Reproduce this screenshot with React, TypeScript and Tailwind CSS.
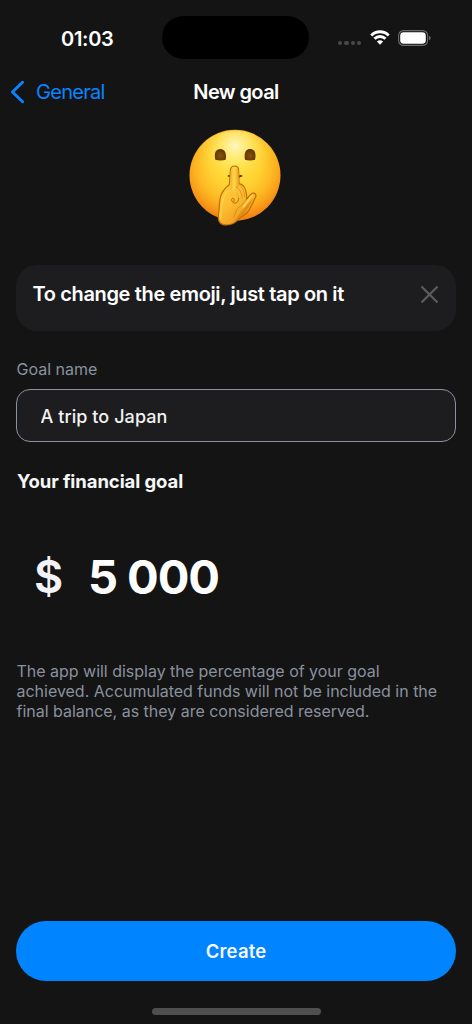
import { useState } from 'react';

function StatusBar() {
  return (
    <div className="flex h-[43px] items-center">
      <div className="w-[162.4px] pt-[2.5px] pl-[61px] text-[20px] leading-[24px] font-semibold tracking-[-0.015em]">
        01:03
      </div>
      <div className="h-[43px] w-[147px] rounded-full bg-black" />
      <div className="flex items-center pl-[28.6px]">
        <div className="flex gap-[2.2px] pt-[11px]">
          <span className="size-[4.2px] rounded-full bg-[#484848]" />
          <span className="size-[4.2px] rounded-full bg-[#484848]" />
          <span className="size-[4.2px] rounded-full bg-[#484848]" />
          <span className="size-[4.2px] rounded-full bg-[#484848]" />
        </div>
        <svg className="ml-[8.3px] h-[15px] w-[20px]" viewBox="0 0 20 15" fill="none">
          <path d="M1.3 5.4a12.3 12.3 0 0 1 17.4 0" stroke="#fff" strokeWidth="2.9" />
          <path d="M4.5 8.8a7.7 7.7 0 0 1 11 0" stroke="#fff" strokeWidth="2.8" />
          <path d="M10 14.8 6.9 11.6a4.5 4.5 0 0 1 6.2 0Z" fill="#fff" />
        </svg>
        <svg className="ml-[8px] h-[16px] w-[33px]" viewBox="0 0 33 16" fill="none">
          <rect x="0.6" y="0.6" width="29" height="14.8" rx="4.8" stroke="#6b6b6b" strokeWidth="1.1" />
          <rect x="2.2" y="2.3" width="25.6" height="11.4" rx="3.4" fill="#fff" />
          <path d="M31 5.8c1.2.5 1.6 1.3 1.6 2.2s-.4 1.7-1.6 2.2Z" fill="#6b6b6b" />
        </svg>
      </div>
    </div>
  );
}

function ShushingEmoji() {
  return (
    <svg className="h-[115px] w-[110px]" viewBox="3 0 330 345" fill="none">
      <defs>
        <radialGradient id="face" cx="165" cy="135" r="168" gradientUnits="userSpaceOnUse">
          <stop offset="0" stopColor="#ffde38" />
          <stop offset="0.45" stopColor="#ffd030" />
          <stop offset="0.68" stopColor="#fdb924" />
          <stop offset="0.85" stopColor="#f99c19" />
          <stop offset="1" stopColor="#ee7f12" />
        </radialGradient>
        <radialGradient id="shine" cx="165" cy="78" r="115" gradientUnits="userSpaceOnUse">
          <stop offset="0" stopColor="#fffbd0" stopOpacity="0.9" />
          <stop offset="0.4" stopColor="#fff386" stopOpacity="0.6" />
          <stop offset="1" stopColor="#ffe13a" stopOpacity="0" />
        </radialGradient>
        <linearGradient id="hand" x1="125" y1="190" x2="205" y2="290" gradientUnits="userSpaceOnUse">
          <stop offset="0" stopColor="#ffcf3c" />
          <stop offset="0.5" stopColor="#fdbd33" />
          <stop offset="1" stopColor="#ee9a1b" />
        </linearGradient>
        <linearGradient id="finger" x1="150" y1="0" x2="177" y2="0" gradientUnits="userSpaceOnUse">
          <stop offset="0" stopColor="#f3a81d" />
          <stop offset="0.45" stopColor="#ffd94d" />
          <stop offset="1" stopColor="#f0a01c" />
        </linearGradient>
        <radialGradient id="eye" cx="0.5" cy="0.6" r="0.6">
          <stop offset="0" stopColor="#875408" />
          <stop offset="1" stopColor="#5b3200" />
        </radialGradient>
      </defs>
      <circle cx="165" cy="166" r="136.5" fill="url(#face)" />
      <circle cx="165" cy="166" r="134" fill="url(#shine)" />
      <path d="M106 119c-5-22 3-32 15-32s20 11 16 32c-9 3-22 3-31 0Z" fill="url(#eye)" />
      <path d="M195 119c-4-21 3-32 15-32s20 10 15 32c-9 3-21 3-30 0Z" fill="url(#eye)" />
      <path d="M142 168c3-4 6-4 9-2 8 3 22 3 28 0 4-2 7-1 9 2-3 3-6 3-8 4-4 4-8 5-15 5s-11-1-14-5c-3-1-6-1-9-4Z" fill="#633407" />
      {/* hand */}
      <path
        d="M151 151c1-9 5-13 13-13s12 5 12 14l1 39c10 2 17 9 20 20 2 9 4 17 3 27 5-8 10-14 17-18 7-3 13 4 10 11l-20 40c-8 16-22 16-31 26-8 10-21 18-38 18-19 0-26-13-22-35 3-15 1-28 4-43 3-17 11-31 28-43Z"
        stroke="#c06a08"
        strokeWidth="3.5"
        fill="url(#hand)"
      />
      <path d="M152 153c1-8 5-12 12-12s10 4 11 12l2 48-25 10Z" fill="url(#finger)" />
      {/* curled fingers and the palm fold */}
      <path d="M160 248c5-8 2-15-3-13-6 4 1 17 11 14 11-4 12-27-2-39" stroke="#bd700a" strokeWidth="3" strokeLinecap="round" />
      <path d="M168 201c11 5 18 17 18 34M179 195c9 7 14 19 15 36" stroke="#d88b14" strokeWidth="2.5" strokeLinecap="round" />
      <path d="M160 208c10 4 16 12 18 24" stroke="#ffdc58" strokeWidth="4" strokeLinecap="round" opacity="0.7" />
      <path d="M199 238c-8 18-22 20-29 31-5 8-4 15-9 22" stroke="#d88b14" strokeWidth="3" strokeLinecap="round" />
      <path d="M218 226c-9 8-19 23-27 34" stroke="#ffd64c" strokeWidth="6" strokeLinecap="round" />
      <path d="M185 274c-8 10-15 22-26 29 19-4 35-17 42-33l16-31c-11 8-22 23-32 35Z" fill="#d67f0e" opacity="0.6" />
      <path d="M122 294c-3-20 4-40 8-58 3-9 9-19 16-23" stroke="#ffda50" strokeWidth="6" strokeLinecap="round" opacity="0.6" />
    </svg>
  );
}

export default function App() {
  const [goalName, setGoalName] = useState('A trip to Japan');

  return (
    <div className="flex h-[1024px] w-[472px] flex-col overflow-hidden bg-[#141414] pt-[16.4px] font-['Inter',sans-serif] text-white">
      <StatusBar />

      <div className="mt-[14.6px] grid h-[36px] grid-cols-[1fr_auto_1fr] items-center text-[20px] leading-[24px]">
        <button className="flex items-center pl-[10px] text-[#0a84ff]">
          <svg className="h-[24px] w-[15px]" viewBox="0 0 15 24" fill="none">
            <path d="M12.6 2.2 2.4 12l10.2 9.8" stroke="currentColor" strokeWidth="2.9" strokeLinecap="round" strokeLinejoin="round" />
          </svg>
          <span className="ml-[11px] tracking-[-0.035em]">General</span>
        </button>
        <h1 className="font-semibold tracking-[-0.03em]">New goal</h1>
        <span />
      </div>

      <div className="mt-[10px] flex justify-center">
        <ShushingEmoji />
      </div>

      <div className="mx-4 mt-[30px] flex h-[66px] justify-between rounded-[21px] bg-[#1d1d1f] pt-[17px] pr-[18px] pl-[16.5px]">
        <p className="text-[20px] leading-[24px] font-semibold tracking-[-0.018em]">To change the emoji, just tap on it</p>
        <svg className="mt-[4px] size-[17px]" viewBox="0 0 17 17" fill="none">
          <path d="m1.2 1.2 14.6 14.6m0-14.6L1.2 15.8" stroke="#5b5b5e" strokeWidth="2.3" strokeLinecap="round" />
        </svg>
      </div>

      <div className="mx-4 mt-[28px]">
        <label className="block pl-[0.5px] text-[16px] leading-[20px] text-[#8a919e]">Goal name</label>
        <input
          value={goalName}
          onChange={(e) => setGoalName(e.target.value)}
          className="mt-[10px] block h-[53px] w-full rounded-[14px] border border-[#8a919e] bg-[#1d1d1f] px-[23.5px] pt-[2px] text-[18px] font-medium tracking-[0.004em] text-[#f2f2f2] outline-none"
        />
      </div>

      <h2 className="mt-[27px] ml-[17px] text-[18.5px] leading-[24px] font-bold tracking-[-0.004em] text-[#f7f7f7]">
        Your financial goal
      </h2>

      <div className="mt-[56px] ml-[34px] flex h-[56px] items-center text-[47px] leading-[56px] font-bold">
        <span className="w-[54px] text-[45px] font-semibold text-[#f2f2f7]">$</span>
        <span className="flex gap-[10px] tracking-[-0.022em]">
          <span>5</span>
          <span>000</span>
        </span>
      </div>

      <p className="mt-[57px] ml-[16.5px] text-[16px] leading-[19.8px] tracking-[-0.001em] text-[#8a919e]">
        The app will display the percentage of your goal
        <br />
        achieved. Accumulated funds will not be included in the
        <br />
        final balance, as they are considered reserved.
      </p>

      <div className="mt-auto flex flex-col items-center px-4 pb-[9px]">
        <button className="h-[60px] w-full rounded-full bg-[#0084ff] pt-px text-[18.5px] font-semibold tracking-[0.008em] text-[#f5f8ff]">
          Create
        </button>
        <div className="mt-[27px] h-[7px] w-[169px] rounded-full bg-[#4f4f4f]" />
      </div>
    </div>
  );
}
